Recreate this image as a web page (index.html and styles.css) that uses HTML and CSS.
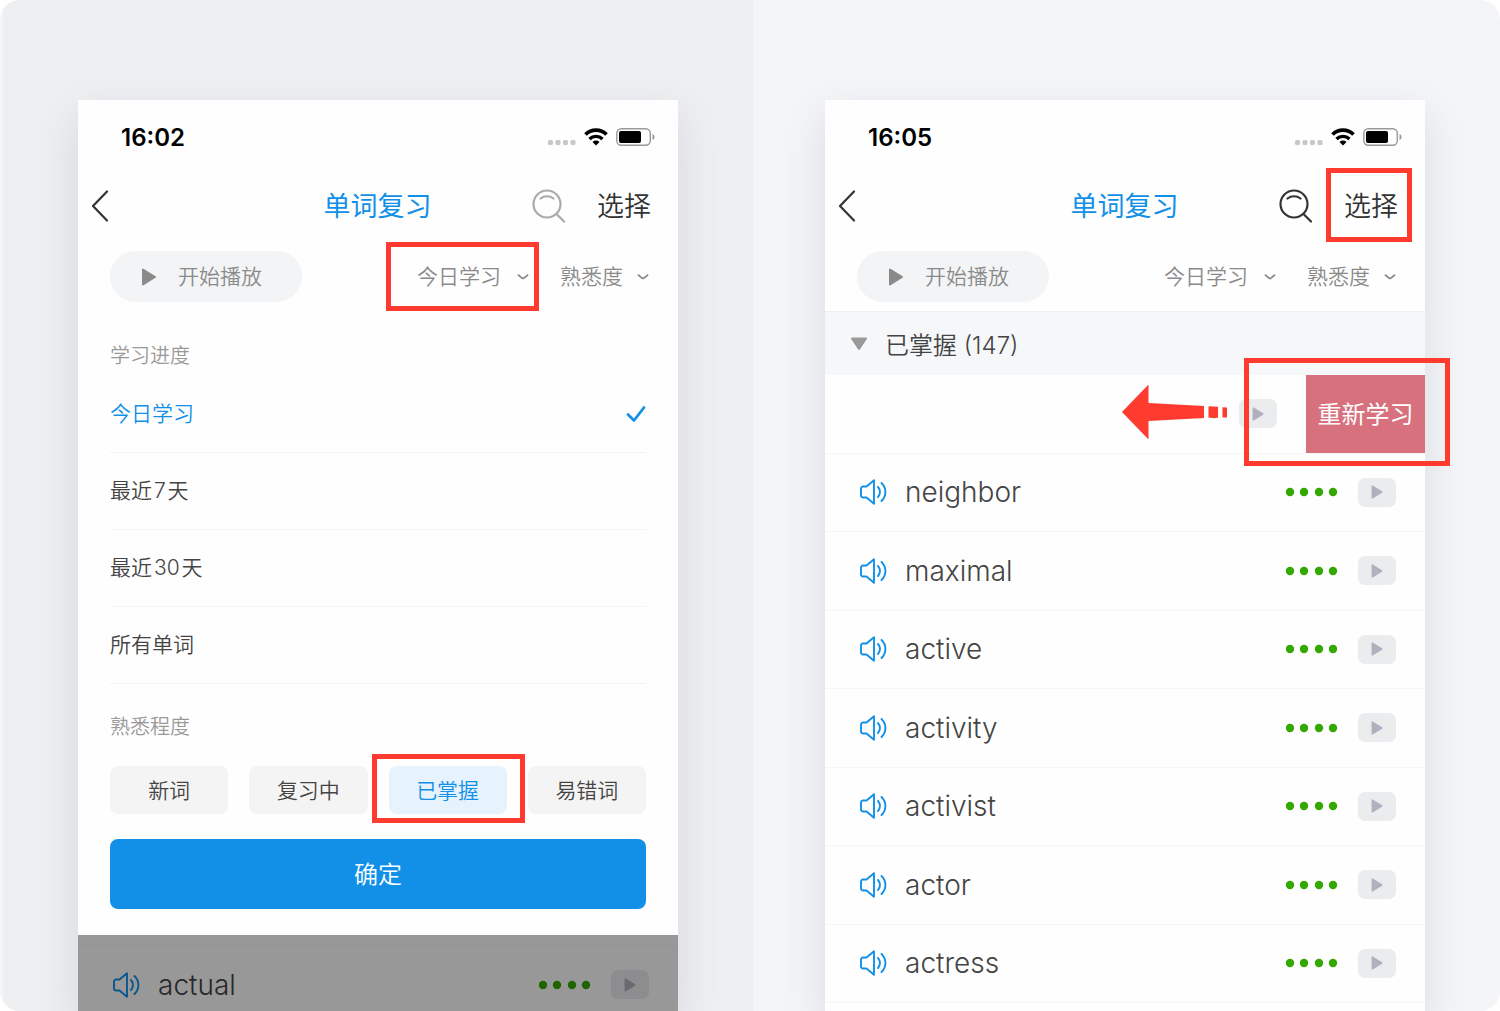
FILE: index.html
```html
<!DOCTYPE html>
<html lang="zh-CN">
<head>
    <meta charset="UTF-8">
    <meta name="viewport" content="width=device-width, initial-scale=1.0">
    <title>单词复习</title>
    <link rel="stylesheet" href="styles.css">
</head>
<body>
    <svg class="sprite" aria-hidden="true">
        <symbol id="wifi" viewBox="0 0 24 18">
            <path d="M1.5 6.5a15 15 0 0 1 21 0" fill="none" stroke="#000" stroke-width="3.8"/>
            <path d="M5.5 11a9.400 9.400 0 0 1 13 0" fill="none" stroke="#000" stroke-width="3.400"/>
            <path d="M12 17.500l-3.500-3.500a5 5 0 0 1 7 0z"/>
        </symbol>
        <symbol id="battery" viewBox="0 0 39 18">
            <rect x="0.800" y="0.800" width="33.500" height="16.400" rx="4.500" fill="none" stroke="#999" stroke-width="1.400"/>
            <rect x="3" y="3" width="22" height="12" rx="2"/>
            <path d="M36.500 6v6c1.300-.5 2-1.700 2-3s-.7-2.500-2-3z" fill="#999"/>
        </symbol>
        <symbol id="back" viewBox="0 0 18 32">
            <path d="M16 1.500L2 16l14 14.500" fill="none" stroke="#333" stroke-width="2.200" stroke-linecap="round" stroke-linejoin="round"/>
        </symbol>
        <symbol id="search" viewBox="0 0 34 34">
            <g fill="none" stroke="currentColor" stroke-width="2.200" stroke-linecap="round">
                <circle cx="15" cy="15" r="13.500"/>
                <path d="M25 25.500l7 7M8.500 9.500a10.500 10.500 0 0 1 13 0"/>
            </g>
        </symbol>
        <symbol id="chevron" viewBox="0 0 12 6">
            <path d="M1.500 1.200Q5 4.500 6 4.500T10.500 1.200" fill="none" stroke="#8a8a8a" stroke-width="1.800" stroke-linecap="round"/>
        </symbol>
        <symbol id="play" viewBox="0 0 14 18">
            <path d="M1 1.500v15L13 9z" fill="currentColor" stroke="currentColor" stroke-width="2" stroke-linejoin="round"/>
        </symbol>
        <symbol id="speaker" viewBox="0 0 27 26">
            <g fill="none" stroke="#1290e8" stroke-width="1.900" stroke-linecap="round" stroke-linejoin="round">
                <path d="M3 7.500h3.500L14 1.200v23.600L6.500 18.500H3a2 2 0 0 1-2-2v-7a2 2 0 0 1 2-2z"/>
                <path d="M18 8c2.600 2.800 2.600 7.200 0 10M21.500 4c5.200 5 5.200 13 0 18"/>
            </g>
        </symbol>
        <symbol id="check" viewBox="0 0 20 18">
            <path d="M2 9.500l6 6L18 2.500" fill="none" stroke="#1290e8" stroke-width="2.800" stroke-linecap="round" stroke-linejoin="round"/>
        </symbol>
        <symbol id="dots" viewBox="0 0 53 10">
            <g fill="#32a800">
                <circle cx="5" cy="5" r="4.200"/>
                <circle cx="19" cy="5" r="4.200"/>
                <circle cx="34" cy="5" r="4.200"/>
                <circle cx="48" cy="5" r="4.200"/>
            </g>
        </symbol>
        <symbol id="signal" viewBox="0 0 28 6">
            <g fill="#c8c8c8">
                <rect width="5" height="5" rx="1.500"/>
                <rect x="7.500" width="5" height="5" rx="1.500"/>
                <rect x="15" width="5" height="5" rx="1.500"/>
                <rect x="22.500" width="5" height="5" rx="1.500"/>
            </g>
        </symbol>
    </svg>

    <main class="stage">
        <section class="panel panel-filter">
            <div class="phone">
                <div class="status">
                    <span class="time">16:02</span>
                    <svg class="signal"><use href="#signal"/></svg>
                    <svg class="wifi"><use href="#wifi"/></svg>
                    <svg class="battery"><use href="#battery"/></svg>
                </div>
                <header class="nav">
                    <button class="back" aria-label="返回"><svg><use href="#back"/></svg></button>
                    <h1>单词复习</h1>
                    <div class="actions">
                        <button class="search muted" aria-label="搜索"><svg><use href="#search"/></svg></button>
                        <button class="select">选择</button>
                    </div>
                </header>
                <div class="toolbar">
                    <button class="start"><svg><use href="#play"/></svg><span>开始播放</span></button>
                    <label class="filter filter-range">
                        <select aria-label="学习进度"><option>今日学习</option></select>
                        <svg><use href="#chevron"/></svg>
                        <span class="mark mark-range"></span>
                    </label>
                    <label class="filter filter-level">
                        <select aria-label="熟悉程度"><option>熟悉度</option></select>
                        <svg><use href="#chevron"/></svg>
                    </label>
                </div>
                <form class="sheet">
                    <h2>学习进度</h2>
                    <div class="options">
                        <label class="option"><input type="radio" name="range" checked><span>今日学习</span><svg><use href="#check"/></svg></label>
                        <label class="option"><input type="radio" name="range"><span>最近&#8202;7&#8202;天</span></label>
                        <label class="option"><input type="radio" name="range"><span>最近&#8202;30&#8202;天</span></label>
                        <label class="option"><input type="radio" name="range"><span>所有单词</span></label>
                    </div>
                    <h2 class="second">熟悉程度</h2>
                    <div class="chips">
                        <label class="chip"><input type="radio" name="level"><span>新词</span></label>
                        <label class="chip"><input type="radio" name="level"><span>复习中</span></label>
                        <label class="chip"><input type="radio" name="level" checked><span>已掌握</span><i class="mark mark-chip"></i></label>
                        <label class="chip"><input type="radio" name="level"><span>易错词</span></label>
                    </div>
                    <button type="button" class="confirm">确定</button>
                </form>
                <div class="behind">
                    <div class="word">
                        <svg class="speaker"><use href="#speaker"/></svg>
                        <span class="text">actual</span>
                        <svg class="dots"><use href="#dots"/></svg>
                        <button class="play" aria-label="播放"><svg><use href="#play"/></svg></button>
                    </div>
                </div>
            </div>
        </section>

        <section class="panel panel-list">
            <div class="phone">
                <div class="status">
                    <span class="time">16:05</span>
                    <svg class="signal"><use href="#signal"/></svg>
                    <svg class="wifi"><use href="#wifi"/></svg>
                    <svg class="battery"><use href="#battery"/></svg>
                </div>
                <header class="nav">
                    <button class="back" aria-label="返回"><svg><use href="#back"/></svg></button>
                    <h1>单词复习</h1>
                    <div class="actions">
                        <button class="search" aria-label="搜索"><svg><use href="#search"/></svg></button>
                        <button class="select">选择<span class="mark mark-select"></span></button>
                    </div>
                </header>
                <div class="toolbar">
                    <button class="start"><svg><use href="#play"/></svg><span>开始播放</span></button>
                    <label class="filter filter-range">
                        <select aria-label="学习进度"><option>今日学习</option></select>
                        <svg><use href="#chevron"/></svg>
                    </label>
                    <label class="filter filter-level">
                        <select aria-label="熟悉程度"><option>熟悉度</option></select>
                        <svg><use href="#chevron"/></svg>
                    </label>
                </div>
                <h2 class="group">
                    <svg viewBox="0 0 18 14"><path d="M2 1.500h14L9 12z" fill="#999" stroke="#999" stroke-width="2" stroke-linejoin="round"/></svg>
                    已掌握 (147)
                </h2>
                <div class="words">
                    <div class="word swiped">
                        <svg class="dots"><use href="#dots"/></svg>
                        <button class="play" aria-label="播放"><svg><use href="#play"/></svg></button>
                        <button class="relearn">重新学习</button>
                        <svg class="arrow" viewBox="0 0 106 56">
                            <path d="M0 28L26.500 0.500V19L82 22v12l-55.500 3v18.500zM86.500 22.300l9.500.5v11h-9.500zM100.500 23.200l4.500.3v10h-4.500z" fill="#ff3b30"/>
                        </svg>
                        <span class="mark mark-relearn"></span>
                    </div>
                </div>
            </div>
        </section>
    </main>

    <script>
        const WORDS = ['neighbor', 'maximal', 'active', 'activity', 'activist', 'actor', 'actress']
        const list = document.querySelector('.words')

        WORDS.forEach(word => {
            const row = document.createElement('div')
            row.className = 'word'
            row.innerHTML = `
                <svg class="speaker"><use href="#speaker"/></svg>
                <span class="text">${word}</span>
                <svg class="dots"><use href="#dots"/></svg>
                <button class="play" aria-label="播放"><svg><use href="#play"/></svg></button>`
            list.appendChild(row)
        })
    </script>
</body>
</html>
```
FILE: styles.css
```css
* {
    box-sizing: border-box;
}
body {
    margin: 0;
    background: #fff;
    color: #444;
    font-family: Inter, "Noto Sans CJK SC", sans-serif;
    font-weight: 350;
}
button, select {
    font: inherit;
    color: inherit;
    border: 0;
    padding: 0;
    background: none;
    cursor: pointer;
}
h1, h2 {
    margin: 0;
    font-weight: 350;
}
svg {
    display: block;
    flex: none;
}
.sprite {
    position: absolute;
    width: 0;
    height: 0;
}

/* two panels side by side */
.stage {
    display: flex;
    height: 100vh;
    min-height: 960px;
    overflow: hidden;
    background: #f4f5f7;
    border-radius: 20px;
}
.panel {
    display: flex;
    justify-content: center;
    padding-top: 100px;
}
.panel-filter {
    width: 50%;
    margin-left: 3px;
    background: #eeeff1;
}
.panel-list {
    flex: 1;
    padding-right: 3px;
}
.phone {
    display: flex;
    flex-direction: column;
    width: 84%;
    max-width: 600px;
    background: #fefefe;
    box-shadow: 0 16px 40px rgba(90, 95, 115, 0.16);
}

.status {
    display: flex;
    flex: none;
    align-items: center;
    height: 72px;
    padding: 2px 23px 0 43px;
}
.time {
    margin-right: auto;
    color: #000;
    font-size: 24px;
    font-weight: 600;
}
.signal {
    width: 28px;
    height: 6px;
    margin: 12px 8px 0 0;
}
.wifi {
    width: 24px;
    height: 18px;
    margin-right: 8px;
}
.battery {
    width: 39px;
    height: 18px;
}

.nav {
    display: grid;
    flex: none;
    grid-template-columns: 1fr auto 1fr;
    align-items: center;
    height: 68px;
    padding: 0 27px 0 13px;
}
.nav h1 {
    margin-left: 13px;
    padding-bottom: 3px;
    color: #1290e8;
    font-size: 27px;
    font-weight: 400;
}
.back svg {
    width: 18px;
    height: 32px;
}
.actions {
    display: flex;
    justify-content: flex-end;
    align-items: center;
    gap: 31px;
}
.search {
    color: #333;
}
.search.muted {
    color: #aaa;
}
.search svg {
    width: 34px;
    height: 34px;
}
.select {
    position: relative;
    padding-bottom: 3px;
    color: #333;
    font-size: 27px;
}

.toolbar {
    display: flex;
    flex: none;
    align-items: center;
    height: 71px;
    padding: 2px 29px 0 32px;
    color: #8a8a8a;
    font-size: 21px;
}
.start {
    display: flex;
    align-items: center;
    gap: 22px;
    width: 192px;
    height: 51px;
    margin-right: auto;
    padding-left: 32px;
    border-radius: 26px;
    background: #f3f4f6;
}
.start span {
    padding-bottom: 3px;
}
.start svg {
    width: 14px;
    height: 18px;
}
.filter {
    position: relative;
    display: flex;
    align-items: center;
}
.filter select {
    width: 100%;
    appearance: none;
    outline: none;
}
.filter svg {
    position: absolute;
    right: 0;
    width: 12px;
    height: 6px;
    pointer-events: none;
}
.filter-range {
    width: 112px;
    margin-right: 31px;
}
.filter-level {
    width: 89px;
}

/* filter sheet */
.sheet {
    flex: none;
    padding: 25px 32px 26px;
}
.sheet h2 {
    color: #999;
    font-size: 20px;
    line-height: 40px;
}
.sheet .second {
    margin: 23px 0 19px;
}
.option {
    display: flex;
    align-items: center;
    justify-content: space-between;
    position: relative;
    height: 77px;
    border-bottom: 1px solid #f3f3f3;
    font-size: 21px;
    cursor: pointer;
}
.option input, .chip input {
    position: absolute;
    opacity: 0;
    margin: 0;
}
.option span {
    padding-bottom: 4px;
}
.option input:checked + span {
    color: #1290e8;
}
.option svg {
    width: 20px;
    height: 18px;
}
.chips {
    display: grid;
    grid-template-columns: repeat(4, 1fr);
    gap: 21px;
    margin-bottom: 25px;
}
.chip {
    position: relative;
    font-size: 21px;
    cursor: pointer;
}
.chip span {
    display: flex;
    align-items: center;
    justify-content: center;
    height: 48px;
    padding-bottom: 3px;
    border-radius: 8px;
    background: #f4f4f4;
}
.chip input:checked + span {
    background: #e6f3fd;
    color: #1290e8;
}
.confirm {
    display: block;
    width: 100%;
    height: 70px;
    padding-bottom: 3px;
    border-radius: 8px;
    background: #1290e8;
    color: #fff;
    font-size: 24px;
}
.behind {
    position: relative;
    flex: 1;
    padding-top: 10px;
}
.behind::after {
    content: "";
    position: absolute;
    inset: 0;
    background: rgba(0, 0, 0, 0.4);
}
.behind .word {
    height: 78px;
    border-top: 1px solid #f6f6f6;
}

/* word list */
.group {
    display: flex;
    flex: none;
    align-items: center;
    gap: 17px;
    height: 64px;
    padding: 0 25px;
    border-top: 1px solid #eee;
    background: #f6f7f9;
    font-size: 24px;
}
.group svg {
    width: 18px;
    height: 14px;
}
.words {
    flex: 1;
    display: flex;
    flex-direction: column;
    padding-bottom: 8px;
}
.word {
    display: flex;
    align-items: center;
    padding: 0 29px 0 35px;
    font-size: 28px;
}
.words .word {
    flex: 1;
    border-bottom: 1px solid #f6f6f6;
}
.speaker {
    width: 27px;
    height: 26px;
    margin-right: 18px;
}
.dots {
    width: 53px;
    height: 10px;
    margin-left: auto;
    margin-right: 20px;
}
.play {
    display: flex;
    align-items: center;
    justify-content: center;
    width: 38px;
    height: 29px;
    border-radius: 7px;
    background: #ebecee;
    color: #b1b0be;
}
.play svg {
    width: 12px;
    height: 14px;
}
.swiped {
    position: relative;
    padding-right: 0;
}
.relearn {
    align-self: stretch;
    width: 119px;
    margin-left: 29px;
    padding-bottom: 2px;
    background: #d7717e;
    color: #fff;
    font-size: 24px;
    font-weight: 400;
}
.arrow {
    position: absolute;
    top: 9px;
    right: 197px;
    width: 106px;
    height: 56px;
}

/* red callout frames drawn over the screens */
.mark {
    position: absolute;
    z-index: 1;
    border: 5px solid #ff3b30;
    pointer-events: none;
}
.mark-range {
    inset: -22px -10px -22px -31px;
}
.mark-chip {
    inset: -12px -18px -9px -17px;
}
.mark-select {
    inset: -17px -14px -15px -18px;
}
.mark-relearn {
    top: -17px;
    right: -25px;
    width: 206px;
    height: 108px;
}
```
